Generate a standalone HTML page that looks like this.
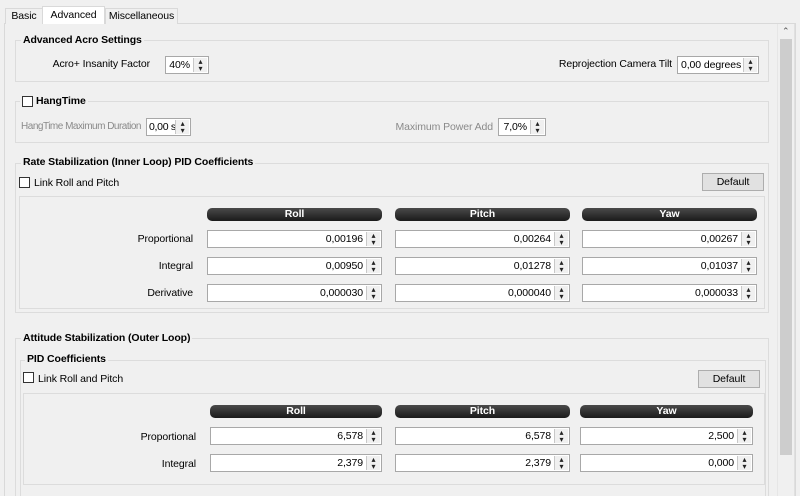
<!DOCTYPE html>
<html><head><meta charset="utf-8"><style>
*{box-sizing:border-box;margin:0;padding:0}
html,body{width:800px;height:496px;overflow:hidden}
body{background:#f0f0f0;font-family:"Liberation Sans",Arial,sans-serif;font-size:10.5px;color:#000;position:relative;white-space:nowrap;letter-spacing:-0.1px}
.a{position:absolute}
.box{position:absolute;border:1px solid #dcdcdc}
.t{position:absolute;font-weight:bold;font-size:10.5px;background:#f0f0f0;padding:0 2px;line-height:13px}
.lbl{position:absolute;text-align:right;line-height:14px}
.sp{position:absolute;background:#fff;border:1px solid #a8a8a8;height:18px;line-height:16px;text-align:right;padding-right:18px}
.sp::after{content:"";position:absolute;right:1px;top:1px;width:13px;height:14px;border-left:1px solid #c8c8c8;background:#f0f0f0}
.sp::before{content:"\25B4\A\25BE";white-space:pre;position:absolute;right:3px;top:1px;font-family:"DejaVu Sans",sans-serif;font-size:8px;line-height:7px;color:#222;z-index:2;text-align:center;width:9px}
.hd{position:absolute;height:13px;border-radius:5px;background:linear-gradient(#4a4a4a,#1a1a1a);color:#fff;font-weight:bold;text-align:center;line-height:13px;font-size:10.5px}
.cb{position:absolute;width:11px;height:11px;border:1px solid #333;background:#fff}
.btn{position:absolute;border:1px solid #adadad;background:#e1e1e1;text-align:center;line-height:16px}
.tab{position:absolute;border:1px solid #d9d9d9;border-bottom:none;background:#f0f0f0;text-align:center;line-height:15px}
</style></head><body>
<div class="a" style="left:4px;top:23px;width:792px;height:473px;border:1px solid #d9d9d9;border-bottom:none;background:#f0f0f0"></div>
<div class="tab" style="left:5px;top:8px;width:38px;height:16px">Basic</div>
<div class="tab" style="left:42px;top:6px;width:63px;height:18px;background:#fff;line-height:17px">Advanced</div>
<div class="tab" style="left:105px;top:8px;width:73px;height:16px">Miscellaneous</div>
<!-- scrollbar -->
<div class="a" style="left:777px;top:24px;width:18px;height:472px;background:#f0f0f0;border-left:1px solid #e6e6e6;border-right:1px solid #e0e0e0"></div>
<div class="a" style="left:780px;top:39px;width:12px;height:416px;background:#cdcdcd"></div>
<div class="a" style="left:782px;top:27px;font-size:9px;color:#555;font-family:'DejaVu Sans',sans-serif">&#8963;</div>

<!-- Advanced Acro -->
<div class="box" style="left:15px;top:40px;width:754px;height:42px"></div>
<div class="t" style="left:21px;top:34px">Advanced Acro Settings</div>
<div class="lbl" style="left:20px;top:57px;width:130px">Acro+ Insanity Factor</div>
<div class="sp" style="left:165px;top:56px;width:44px">40%</div>
<div class="lbl" style="left:530px;top:57px;width:142px">Reprojection Camera Tilt</div>
<div class="sp" style="left:677px;top:56px;width:82px;text-align:left;padding-left:3px">0,00 degrees</div>

<!-- HangTime -->
<div class="box" style="left:15px;top:101px;width:754px;height:42px"></div>
<div class="t" style="left:20px;top:95px;padding-left:16px">HangTime</div>
<div class="cb" style="left:22px;top:96px"></div>
<div class="lbl" style="left:10px;top:120px;width:131px;color:#8a8a8a;letter-spacing:-0.5px;font-size:10px">HangTime Maximum Duration</div>
<div class="sp" style="left:146px;top:118px;width:45px;text-align:left;padding-left:2px;padding-right:14px;letter-spacing:-0.3px">0,00 s</div>
<div class="lbl" style="left:370px;top:120px;width:123px;color:#8a8a8a">Maximum Power Add</div>
<div class="sp" style="left:498px;top:118px;width:48px">7,0%</div>

<!-- Rate -->
<div class="box" style="left:15px;top:163px;width:754px;height:150px"></div>
<div class="t" style="left:21px;top:156px">Rate Stabilization (Inner Loop) PID Coefficients</div>
<div class="cb" style="left:19px;top:177px"></div>
<div class="a" style="left:34px;top:176px;line-height:14px">Link Roll and Pitch</div>
<div class="btn" style="left:702px;top:173px;width:62px;height:18px">Default</div>
<div class="box" style="left:19px;top:196px;width:746px;height:113px"></div>
<div class="hd" style="left:207px;top:208px;width:175px">Roll</div>
<div class="hd" style="left:395px;top:208px;width:175px">Pitch</div>
<div class="hd" style="left:582px;top:208px;width:175px">Yaw</div>
<div class="lbl" style="left:100px;top:232px;width:93px">Proportional</div>
<div class="lbl" style="left:100px;top:259px;width:93px">Integral</div>
<div class="lbl" style="left:100px;top:286px;width:93px">Derivative</div>
<div class="sp" style="left:207px;top:230px;width:175px">0,00196</div>
<div class="sp" style="left:395px;top:230px;width:175px">0,00264</div>
<div class="sp" style="left:582px;top:230px;width:175px">0,00267</div>
<div class="sp" style="left:207px;top:257px;width:175px">0,00950</div>
<div class="sp" style="left:395px;top:257px;width:175px">0,01278</div>
<div class="sp" style="left:582px;top:257px;width:175px">0,01037</div>
<div class="sp" style="left:207px;top:284px;width:175px">0,000030</div>
<div class="sp" style="left:395px;top:284px;width:175px">0,000040</div>
<div class="sp" style="left:582px;top:284px;width:175px">0,000033</div>

<!-- Attitude -->
<div class="box" style="left:15px;top:338px;width:754px;height:170px"></div>
<div class="t" style="left:21px;top:332px">Attitude Stabilization (Outer Loop)</div>
<div class="box" style="left:20px;top:360px;width:746px;height:150px"></div>
<div class="t" style="left:25px;top:353px">PID Coefficients</div>
<div class="cb" style="left:23px;top:372px"></div>
<div class="a" style="left:38px;top:372px;line-height:14px">Link Roll and Pitch</div>
<div class="btn" style="left:698px;top:370px;width:62px;height:18px">Default</div>
<div class="box" style="left:23px;top:393px;width:742px;height:92px"></div>
<div class="hd" style="left:210px;top:405px;width:172px">Roll</div>
<div class="hd" style="left:395px;top:405px;width:175px">Pitch</div>
<div class="hd" style="left:580px;top:405px;width:173px">Yaw</div>
<div class="lbl" style="left:100px;top:430px;width:96px">Proportional</div>
<div class="lbl" style="left:100px;top:457px;width:96px">Integral</div>
<div class="sp" style="left:210px;top:427px;width:172px">6,578</div>
<div class="sp" style="left:395px;top:427px;width:175px">6,578</div>
<div class="sp" style="left:580px;top:427px;width:173px">2,500</div>
<div class="sp" style="left:210px;top:454px;width:172px">2,379</div>
<div class="sp" style="left:395px;top:454px;width:175px">2,379</div>
<div class="sp" style="left:580px;top:454px;width:173px">0,000</div>
</body></html>
